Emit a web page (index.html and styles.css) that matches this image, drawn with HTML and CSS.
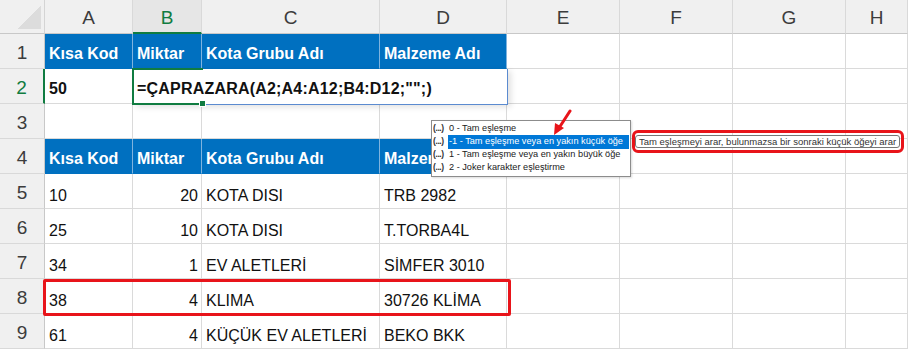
FILE: index.html
```html
<!DOCTYPE html>
<html lang="tr">
<head>
    <meta charset="UTF-8">
    <title>ÇAPRAZARA</title>
    <link rel="stylesheet" href="styles.css">
</head>
<body>
    <div class="sheet">
        <!-- column headers -->
        <div class="corner"></div>
        <div class="col-head">A</div>
        <div class="col-head active-head">B</div>
        <div class="col-head">C</div>
        <div class="col-head">D</div>
        <div class="col-head">E</div>
        <div class="col-head">F</div>
        <div class="col-head">G</div>
        <div class="col-head">H</div>

        <!-- row 1 -->
        <div class="row-head">1</div>
        <div class="cell head">Kısa Kod</div>
        <div class="cell head">Miktar</div>
        <div class="cell head">Kota Grubu Adı</div>
        <div class="cell head">Malzeme Adı</div>
        <div class="cell"></div>
        <div class="cell"></div>
        <div class="cell"></div>
        <div class="cell"></div>

        <!-- row 2 -->
        <div class="row-head active-row">2</div>
        <div class="cell bold">50</div>
        <div class="cell"></div>
        <div class="cell"></div>
        <div class="cell"></div>
        <div class="cell"></div>
        <div class="cell"></div>
        <div class="cell"></div>
        <div class="cell"></div>

        <!-- row 3 -->
        <div class="row-head">3</div>
        <div class="cell"></div>
        <div class="cell"></div>
        <div class="cell"></div>
        <div class="cell"></div>
        <div class="cell"></div>
        <div class="cell"></div>
        <div class="cell"></div>
        <div class="cell"></div>

        <!-- row 4 -->
        <div class="row-head">4</div>
        <div class="cell head">Kısa Kod</div>
        <div class="cell head">Miktar</div>
        <div class="cell head">Kota Grubu Adı</div>
        <div class="cell head">Malzeme Adı</div>
        <div class="cell"></div>
        <div class="cell"></div>
        <div class="cell"></div>
        <div class="cell"></div>

        <!-- row 5 -->
        <div class="row-head">5</div>
        <div class="cell">10</div>
        <div class="cell num">20</div>
        <div class="cell">KOTA DISI</div>
        <div class="cell">TRB 2982</div>
        <div class="cell"></div>
        <div class="cell"></div>
        <div class="cell"></div>
        <div class="cell"></div>

        <!-- row 6 -->
        <div class="row-head">6</div>
        <div class="cell">25</div>
        <div class="cell num">10</div>
        <div class="cell">KOTA DISI</div>
        <div class="cell">T.TORBA4L</div>
        <div class="cell"></div>
        <div class="cell"></div>
        <div class="cell"></div>
        <div class="cell"></div>

        <!-- row 7 -->
        <div class="row-head">7</div>
        <div class="cell">34</div>
        <div class="cell num">1</div>
        <div class="cell">EV ALETLERİ</div>
        <div class="cell">SİMFER 3010</div>
        <div class="cell"></div>
        <div class="cell"></div>
        <div class="cell"></div>
        <div class="cell"></div>

        <!-- row 8 -->
        <div class="row-head">8</div>
        <div class="cell">38</div>
        <div class="cell num">4</div>
        <div class="cell">KLIMA</div>
        <div class="cell">30726 KLİMA</div>
        <div class="cell"></div>
        <div class="cell"></div>
        <div class="cell"></div>
        <div class="cell"></div>

        <!-- row 9 -->
        <div class="row-head">9</div>
        <div class="cell">61</div>
        <div class="cell num">4</div>
        <div class="cell">KÜÇÜK EV ALETLERİ</div>
        <div class="cell">BEKO BKK</div>
        <div class="cell"></div>
        <div class="cell"></div>
        <div class="cell"></div>
        <div class="cell"></div>

        <!-- formula being typed in B2 -->
        <div class="edit-box">=ÇAPRAZARA(A2;A4:A12;B4:D12;"";)</div>
        <div class="active-cell"><span class="handle"></span></div>

        <!-- autocomplete list -->
        <ul class="dropdown">
            <li><span class="ico">(...)</span><span class="label">0 - Tam eşleşme</span></li>
            <li class="selected"><span class="ico">(...)</span><span class="label">-1 - Tam eşleşme veya en yakın küçük öğe</span></li>
            <li><span class="ico">(...)</span><span class="label">1 - Tam eşleşme veya en yakın büyük öğe</span></li>
            <li><span class="ico">(...)</span><span class="label">2 - Joker karakter eşleştirme</span></li>
        </ul>

        <div class="tooltip">Tam eşleşmeyi arar, bulunmazsa bir sonraki küçük öğeyi arar</div>

        <!-- red annotations -->
        <div class="mark mark-tip"></div>
        <div class="mark mark-row"></div>
        <svg class="arrow" width="24" height="28" viewBox="0 0 24 28">
            <line x1="19" y1="2" x2="8" y2="19" stroke="#e8141a" stroke-width="3" stroke-linecap="round"/>
            <polygon points="3,26 4,14 13,19" fill="#e8141a"/>
        </svg>
    </div>
</body>
</html>
```

FILE: styles.css
```css
/* Sheet */
body {
    margin: 0;
    background: #fff;
    overflow: hidden;
    font-family: 'Liberation Sans', Arial, sans-serif;
}

.sheet {
    position: relative;
    display: grid;
    grid-template-columns: 45px 88px 69px 178px 127px 113px 113px 113px 1fr;
    grid-template-rows: 34px repeat(9, 35px);
    width: 908px;
    height: 350px;
}

.sheet > div {
    box-sizing: border-box;
}

/* Headers */
.corner {
    background: #f0f0f0 linear-gradient(to top left, #dcdcdc 0, #dcdcdc 50%, transparent 50%) no-repeat;
    background-size: 24px 24px;
    background-position: right 3px bottom 4px;
    border-right: 1px solid #d4d4d4;
    border-bottom: 1px solid #c8c8c8;
}

.col-head {
    background: #f0f0f0;
    border-right: 1px solid #d9d9d9;
    border-bottom: 1px solid #c8c8c8;
    color: #3c3c3c;
    font-size: 19px;
    display: flex;
    justify-content: center;
    align-items: flex-end;
    padding-bottom: 4px;
}

.active-head {
    color: #107c41;
    background: #e6e6e6;
    border-bottom: 2px solid #107c41;
    padding-bottom: 3px;
}

.row-head {
    background: #f0f0f0;
    border-right: 1px solid #c8c8c8;
    border-bottom: 1px solid #d9d9d9;
    color: #3c3c3c;
    font-size: 19px;
    display: flex;
    justify-content: center;
    align-items: flex-end;
    padding-bottom: 4px;
}

.active-row {
    color: #107c41;
    border-right: 2px solid #107c41;
}

/* Cells */
.cell {
    border-right: 1px solid #dadada;
    border-bottom: 1px solid #dadada;
    font-size: 16px;
    color: #111;
    display: flex;
    align-items: flex-end;
    padding: 0 3px 3px 4px;
    white-space: nowrap;
}

.cell.num {
    justify-content: flex-end;
}

.cell.bold {
    font-weight: bold;
    padding-bottom: 5px;
}

.cell.head {
    background: #0070c0;
    color: #fff;
    font-weight: bold;
    border-right: 1px solid #7fb3de;
    border-bottom-color: #0070c0;
    padding-bottom: 5px;
}

/* Formula edit box over B2:D2 */
.edit-box {
    position: absolute;
    left: 133px;
    top: 69px;
    width: 375px;
    height: 36px;
    box-sizing: border-box;
    background: #fff;
    border-right: 1px solid #5b8bd0;
    border-bottom: 1px solid #5b8bd0;
    box-shadow: 3px 2px 6px rgba(0, 0, 0, 0.12);
    font-weight: bold;
    font-size: 16px;
    letter-spacing: 0.2px;
    color: #111;
    padding: 11px 0 0 4px;
    white-space: nowrap;
}

.active-cell {
    position: absolute;
    left: 132px;
    top: 68px;
    width: 71px;
    height: 37px;
    box-sizing: border-box;
    border: 2px solid #107c41;
    border-right: none;
}

.handle {
    position: absolute;
    right: -3px;
    bottom: -4px;
    width: 5px;
    height: 5px;
    background: #107c41;
    border: 1px solid #fff;
}

/* Autocomplete list */
.dropdown {
    position: absolute;
    left: 431px;
    top: 120px;
    width: 200px;
    box-sizing: border-box;
    margin: 0;
    padding: 1px 1px 2px 1px;
    list-style: none;
    background: #fff;
    border: 1px solid #8c8c8c;
    box-shadow: 1px 1px 2px rgba(0, 0, 0, 0.15);
    font-size: 9.2px;
    color: #1a1a1a;
}

.dropdown li {
    display: flex;
    height: 13px;
    line-height: 11px;
    padding-top: 1px;
    box-sizing: border-box;
    white-space: nowrap;
}

.dropdown .ico {
    flex: none;
    width: 15px;
    overflow: hidden;
    font-size: 8.5px;
    font-weight: bold;
    letter-spacing: -0.4px;
    color: #333;
}

.dropdown .label {
    flex: 1;
    overflow: hidden;
    padding-left: 1px;
}

.dropdown .selected .label {
    background: #0078d7;
    color: #fff;
    margin: -1px 0;
    padding-top: 1px;
    padding-bottom: 1px;
}

.tooltip {
    position: absolute;
    left: 635px;
    top: 135px;
    width: 265px;
    height: 13px;
    box-sizing: border-box;
    background: #fff;
    border: 1px solid #767676;
    border-radius: 3px;
    font-size: 9.5px;
    line-height: 11px;
    color: #333;
    padding-left: 3px;
    white-space: nowrap;
}

/* Red annotations */
.mark {
    position: absolute;
    box-sizing: border-box;
    border: 3px solid #e8141a;
}

.mark-tip {
    left: 632px;
    top: 130px;
    width: 272px;
    height: 23px;
    border-radius: 6px;
}

.mark-row {
    left: 43px;
    top: 279px;
    width: 468px;
    height: 37px;
    border-radius: 2px;
}

.arrow {
    position: absolute;
    left: 551px;
    top: 109px;
}
```
